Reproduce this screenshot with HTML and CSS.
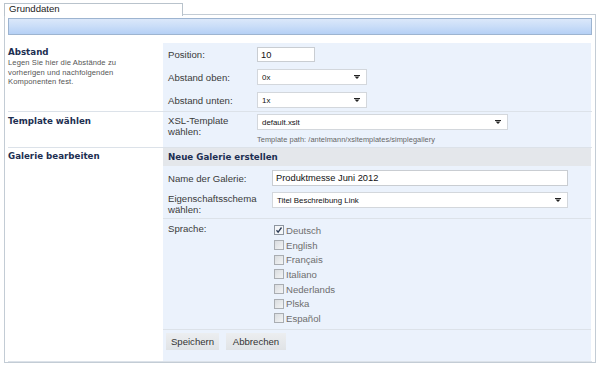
FILE: index.html
```html
<!DOCTYPE html>
<html lang="de">
<head>
<meta charset="utf-8">
<title>Grunddaten</title>
<link rel="stylesheet" href="styles.css">
</head>
<body>
<div class="tabs"><div class="tab">Grunddaten</div></div>
<div class="panel">
  <div class="bar"></div>
  <div class="content">
    <div class="section s1">
      <div class="side">
        <h3>Abstand</h3>
        <p class="desc">Legen Sie hier die Abstände zu vorherigen und nachfolgenden Komponenten fest.</p>
      </div>
      <div class="main">
        <div class="frow"><label>Position:</label><input class="inp pos" type="text" value="10"></div>
        <div class="frow"><label>Abstand oben:</label><div class="sel w110"><span>0x</span><svg class="arr" width="6" height="4" viewBox="0 0 6 4"><path d="M0 0.5h6" stroke="#222" stroke-width="1"/><path d="M0.5 1.5h5L3 4z" fill="#222"/></svg></div></div>
        <div class="frow"><label>Abstand unten:</label><div class="sel w110"><span>1x</span><svg class="arr" width="6" height="4" viewBox="0 0 6 4"><path d="M0 0.5h6" stroke="#222" stroke-width="1"/><path d="M0.5 1.5h5L3 4z" fill="#222"/></svg></div></div>
      </div>
    </div>
    <div class="section s2">
      <div class="side"><h3>Template wählen</h3></div>
      <div class="main">
        <div class="frow top"><label class="two">XSL-Template<br>wählen:</label>
          <div class="fcol">
            <div class="sel w251"><span>default.xslt</span><svg class="arr" width="6" height="4" viewBox="0 0 6 4"><path d="M0 0.5h6" stroke="#222" stroke-width="1"/><path d="M0.5 1.5h5L3 4z" fill="#222"/></svg></div>
            <div class="hint">Template path: /antelmann/xsltemplates/simplegallery</div>
          </div>
        </div>
      </div>
    </div>
    <div class="section s3">
      <div class="side"><h3>Galerie bearbeiten</h3></div>
      <div class="main nopad">
        <div class="subhead">Neue Galerie erstellen</div>
        <div class="sub">
          <div class="frow wide"><label>Name der Galerie:</label><input class="inp name" type="text" value="Produktmesse Juni 2012"></div>
          <div class="frow wide top"><label class="two">Eigenschaftsschema<br>wählen:</label><div class="sel w296"><span>Titel Beschreibung Link</span><svg class="arr" width="6" height="4" viewBox="0 0 6 4"><path d="M0 0.5h6" stroke="#222" stroke-width="1"/><path d="M0.5 1.5h5L3 4z" fill="#222"/></svg></div></div>
        </div>
        <div class="sub lang">
          <div class="frow wide top"><label>Sprache:</label>
            <ul class="checks">
              <li><span class="cb on"><svg width="8" height="8" viewBox="0 0 8 8"><path d="M1.5 4.3l1.6 1.8 3.4-4.6" stroke="#2a3a55" stroke-width="1.3" fill="none"/></svg></span>Deutsch</li>
              <li><span class="cb"></span>English</li>
              <li><span class="cb"></span>Français</li>
              <li><span class="cb"></span>Italiano</li>
              <li><span class="cb"></span>Nederlands</li>
              <li><span class="cb"></span>Plska</li>
              <li><span class="cb"></span>Español</li>
            </ul>
          </div>
        </div>
        <div class="buttons">
          <button class="btn b1">Speichern</button>
          <button class="btn b2">Abbrechen</button>
        </div>
      </div>
    </div>
  </div>
</div>
</body>
</html>
```
FILE: styles.css
```css
* { box-sizing: border-box; }
html, body { margin: 0; padding: 0; background: #fff; }
body {
  font-family: "Liberation Sans", Arial, sans-serif;
  font-size: 9.5px;
  color: #3a3a3a;
  width: 600px;
}
.tabs {
  padding: 3px 0 0 4px;
  height: 15px;
  position: relative;
  z-index: 2;
}
.tab {
  width: 179px;
  height: 13px;
  border: 1px solid #b9c3cc;
  border-bottom: none;
  background: #fff;
  padding: 0 0 0 4px;
  font-size: 9.6px;
  line-height: 10px;
  color: #222;
}
.panel {
  margin: -1px 4px 0 4px;
  border: 1px solid #c3ccd5;
  padding: 3px 3px 2px 3px;
  height: 349px;
  position: relative;
  z-index: 1;
}
.bar {
  height: 17px;
  border: 1px solid #9db4d0;
  background: linear-gradient(#dbe8fa, #c9ddf8 50%, #b5d0f5);
}
.content { margin-top: 8px; }
.section {
  display: grid;
  grid-template-columns: 155px 428px;
  border-bottom: 1px solid #dce2e9;
}
.side { padding: 4px 0 0 0; }
.side h3 {
  margin: 0;
  font-family: "DejaVu Sans", Verdana, sans-serif;
  font-weight: bold;
  font-size: 8.7px;
  line-height: 11px;
  color: #1d2f52;
}
.desc {
  margin: 0;
  font-size: 7.6px;
  line-height: 9.6px;
  color: #555;
  width: 120px;
  letter-spacing: 0.1px;
}
.main {
  background: #ebf2fc;
  padding: 4px 5px 3px 5px;
  display: flex;
  flex-direction: column;
  gap: 7px;
}
.s1 { height: 69px; }
.s2 { height: 36px; }
.s2 .main { padding-top: 2px; }
.s3 .side { padding-top: 3px; }
.frow {
  display: flex;
  align-items: center;
}
.frow.top { align-items: flex-start; }
.frow label {
  width: 89px;
  flex: none;
  color: #3a3a3a;
  font-size: 9.6px;
}
.frow label.two { line-height: 11px; padding-top: 1px; }
.frow.wide label { width: 104px; }
.inp {
  font-family: "Liberation Sans", Arial, sans-serif;
  font-size: 9.3px;
  color: #111;
  height: 15px;
  border: 1px solid #c9cdd2;
  background: #fff;
  padding: 0 3px;
  margin: 0;
  outline: none;
}
.pos { width: 58px; }
.name { width: 296px; height: 16px; }
.sel {
  height: 16px;
  border: 1px solid #d3d7dc;
  background: #fff;
  display: flex;
  align-items: center;
  justify-content: space-between;
  padding: 0 6px 0 4px;
  font-size: 7.9px;
  color: #111;
}
.w110 { width: 110px; }
.w251 { width: 251px; }
.w296 { width: 296px; }
.arr { display: block; flex: none; }
.fcol { display: flex; flex-direction: column; }
.hint {
  font-size: 7.4px;
  color: #666;
  margin-top: 5px;
  letter-spacing: 0.05px;
}
.nopad { padding: 0; gap: 0; }
.subhead {
  background: #e4e7eb;
  height: 18px;
  padding: 0 0 0 5px;
  display: flex;
  align-items: center;
  font-family: "DejaVu Sans", Verdana, sans-serif;
  font-weight: bold;
  font-size: 8.7px;
  color: #1d2f52;
}
.sub {
  padding: 4px 5px 3px 5px;
  display: flex;
  flex-direction: column;
  gap: 6px;
  border-bottom: 1px solid #dce2e9;
}
.checks {
  list-style: none;
  margin: 0;
  padding: 0 0 0 2px;
}
.checks li {
  display: flex;
  align-items: center;
  height: 14.7px;
  color: #6e6e6e;
  font-size: 9.6px;
}
.cb {
  width: 10px;
  height: 10px;
  border: 1px solid #a9adb2;
  background: linear-gradient(135deg, #d9dcdf, #f3f4f5);
  margin-right: 2px;
  display: flex;
  align-items: center;
  justify-content: center;
}
.cb.on { background: #f4f6f8; border-color: #8e96a0; }
.buttons {
  display: flex;
  gap: 7px;
  padding: 3px 3px 0 3px;
  height: 31px;
}
.btn {
  font-family: "Liberation Sans", Arial, sans-serif;
  font-size: 9.6px;
  color: #333;
  height: 17px;
  border: none;
  background: linear-gradient(#eceef0, #e0e3e6);
  padding: 0;
  margin: 0;
}
.b1 { width: 53px; }
.b2 { width: 60px; }
```
